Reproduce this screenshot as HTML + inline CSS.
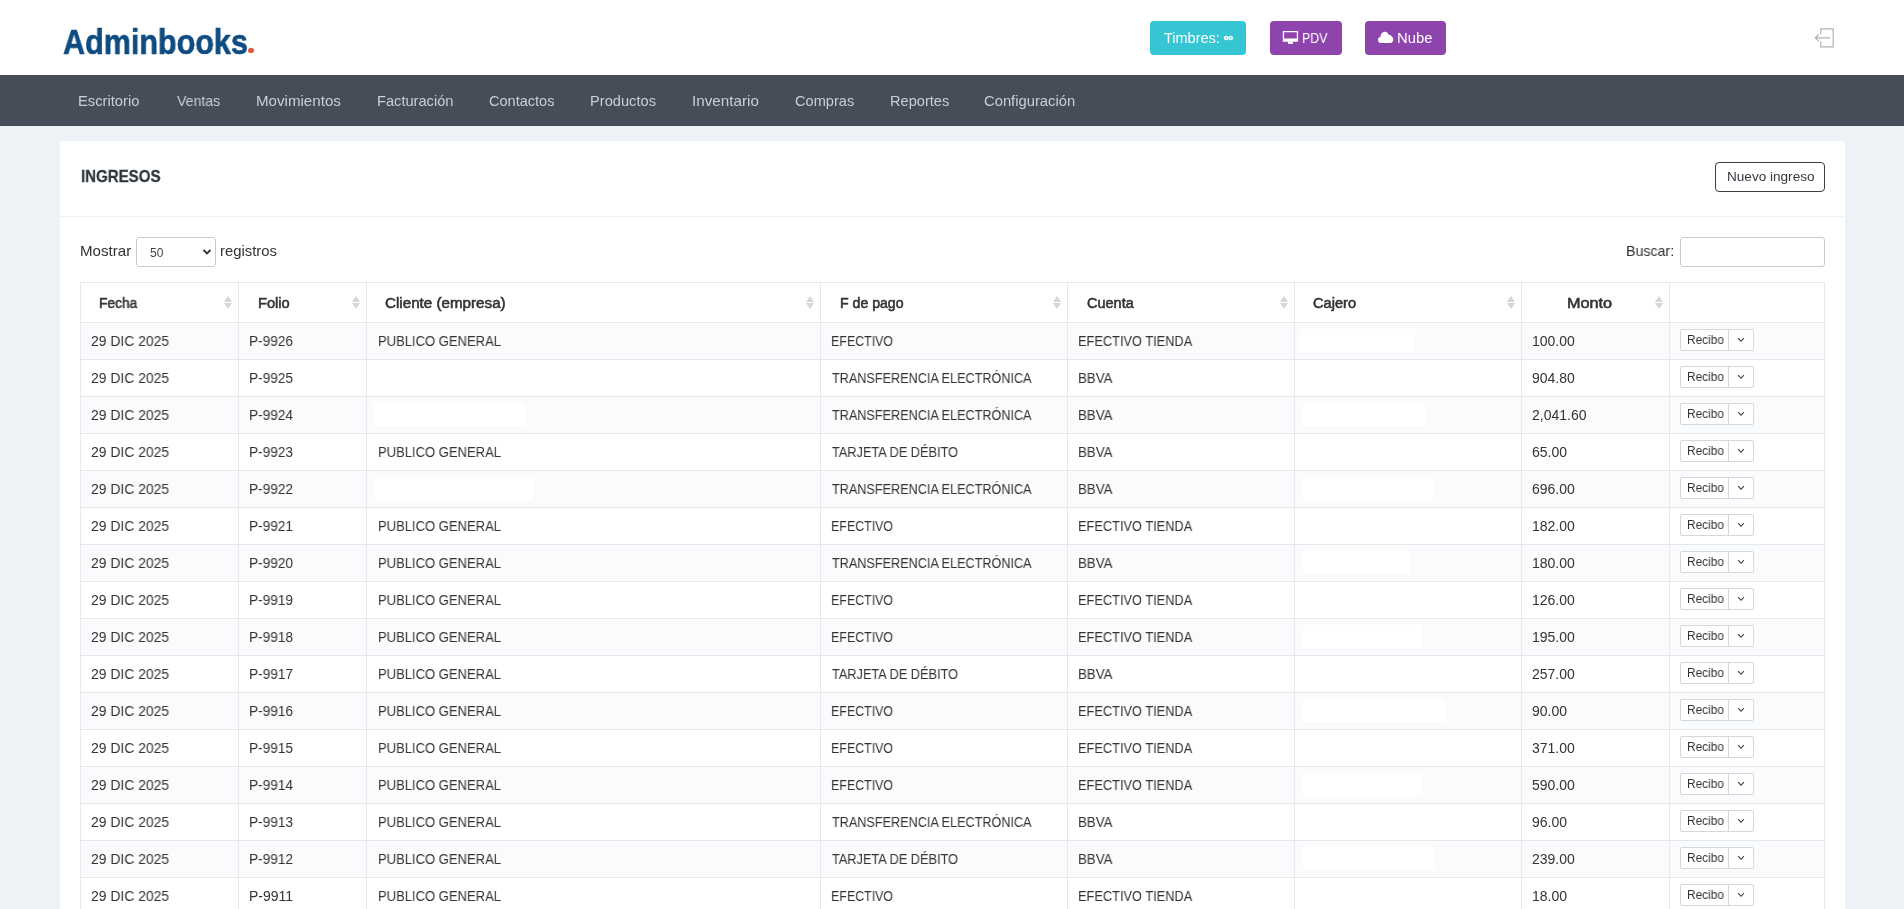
<!DOCTYPE html><html><head><meta charset="utf-8"><style>
*{box-sizing:border-box}
html,body{margin:0;padding:0}
body{width:1904px;height:909px;overflow:hidden;position:relative;background:#eef1f6;font-family:'Liberation Sans', sans-serif}
.t{position:absolute;white-space:nowrap;transform-origin:0 0;will-change:transform}
.a{position:absolute}
</style></head><body>
<div class="a" style="left:0;top:0;width:1904px;height:75px;background:#fff"></div>
<div class="a" style="left:0;top:75px;width:1904px;height:51px;background:#474d58"></div>
<div class="a" style="left:60px;top:141px;width:1785px;height:800px;background:#fff;border-radius:3px"></div>
<div class="a" style="left:60px;top:216px;width:1785px;height:1px;background:#eef1f5"></div>

<div class="a" style="left:80px;top:322px;width:1744px;height:37px;background:#fafbfd"></div>
<div class="a" style="left:80px;top:396px;width:1744px;height:37px;background:#fafbfd"></div>
<div class="a" style="left:80px;top:470px;width:1744px;height:37px;background:#fafbfd"></div>
<div class="a" style="left:80px;top:544px;width:1744px;height:37px;background:#fafbfd"></div>
<div class="a" style="left:80px;top:618px;width:1744px;height:37px;background:#fafbfd"></div>
<div class="a" style="left:80px;top:692px;width:1744px;height:37px;background:#fafbfd"></div>
<div class="a" style="left:80px;top:766px;width:1744px;height:37px;background:#fafbfd"></div>
<div class="a" style="left:80px;top:840px;width:1744px;height:37px;background:#fafbfd"></div>
<div class="a" style="left:1300px;top:329px;width:115px;height:23px;background:#fff"></div>
<div class="a" style="left:373px;top:403px;width:152px;height:23px;background:#fff"></div>
<div class="a" style="left:1303px;top:403px;width:122px;height:23px;background:#fff"></div>
<div class="a" style="left:375px;top:477px;width:158px;height:23px;background:#fff"></div>
<div class="a" style="left:1303px;top:477px;width:130px;height:23px;background:#fff"></div>
<div class="a" style="left:1303px;top:551px;width:107px;height:23px;background:#fff"></div>
<div class="a" style="left:1303px;top:625px;width:119px;height:23px;background:#fff"></div>
<div class="a" style="left:1303px;top:699px;width:142px;height:23px;background:#fff"></div>
<div class="a" style="left:1303px;top:773px;width:119px;height:23px;background:#fff"></div>
<div class="a" style="left:1303px;top:847px;width:132px;height:23px;background:#fff"></div>
<div class="a" style="left:80px;top:282px;width:1745px;height:1px;background:#e7e8ec"></div>
<div class="a" style="left:80px;top:322px;width:1745px;height:1px;background:#e7e8ec"></div>
<div class="a" style="left:80px;top:359px;width:1745px;height:1px;background:#e7e8ec"></div>
<div class="a" style="left:80px;top:396px;width:1745px;height:1px;background:#e7e8ec"></div>
<div class="a" style="left:80px;top:433px;width:1745px;height:1px;background:#e7e8ec"></div>
<div class="a" style="left:80px;top:470px;width:1745px;height:1px;background:#e7e8ec"></div>
<div class="a" style="left:80px;top:507px;width:1745px;height:1px;background:#e7e8ec"></div>
<div class="a" style="left:80px;top:544px;width:1745px;height:1px;background:#e7e8ec"></div>
<div class="a" style="left:80px;top:581px;width:1745px;height:1px;background:#e7e8ec"></div>
<div class="a" style="left:80px;top:618px;width:1745px;height:1px;background:#e7e8ec"></div>
<div class="a" style="left:80px;top:655px;width:1745px;height:1px;background:#e7e8ec"></div>
<div class="a" style="left:80px;top:692px;width:1745px;height:1px;background:#e7e8ec"></div>
<div class="a" style="left:80px;top:729px;width:1745px;height:1px;background:#e7e8ec"></div>
<div class="a" style="left:80px;top:766px;width:1745px;height:1px;background:#e7e8ec"></div>
<div class="a" style="left:80px;top:803px;width:1745px;height:1px;background:#e7e8ec"></div>
<div class="a" style="left:80px;top:840px;width:1745px;height:1px;background:#e7e8ec"></div>
<div class="a" style="left:80px;top:877px;width:1745px;height:1px;background:#e7e8ec"></div>
<div class="a" style="left:80px;top:914px;width:1745px;height:1px;background:#e7e8ec"></div>
<div class="a" style="left:80px;top:282px;width:1px;height:640px;background:#e7e8ec"></div>
<div class="a" style="left:238px;top:282px;width:1px;height:640px;background:#e7e8ec"></div>
<div class="a" style="left:366px;top:282px;width:1px;height:640px;background:#e7e8ec"></div>
<div class="a" style="left:820px;top:282px;width:1px;height:640px;background:#e7e8ec"></div>
<div class="a" style="left:1067px;top:282px;width:1px;height:640px;background:#e7e8ec"></div>
<div class="a" style="left:1294px;top:282px;width:1px;height:640px;background:#e7e8ec"></div>
<div class="a" style="left:1521px;top:282px;width:1px;height:640px;background:#e7e8ec"></div>
<div class="a" style="left:1669px;top:282px;width:1px;height:640px;background:#e7e8ec"></div>
<div class="a" style="left:1824px;top:282px;width:1px;height:640px;background:#e7e8ec"></div>
<svg class="a" style="left:224px;top:295px" width="8" height="15" viewBox="0 0 8 15"><path d="M4 1L8 7H0Z M4 14L8 8H0Z" fill="#d3d6da"/></svg>
<svg class="a" style="left:352px;top:295px" width="8" height="15" viewBox="0 0 8 15"><path d="M4 1L8 7H0Z M4 14L8 8H0Z" fill="#d3d6da"/></svg>
<svg class="a" style="left:806px;top:295px" width="8" height="15" viewBox="0 0 8 15"><path d="M4 1L8 7H0Z M4 14L8 8H0Z" fill="#d3d6da"/></svg>
<svg class="a" style="left:1053px;top:295px" width="8" height="15" viewBox="0 0 8 15"><path d="M4 1L8 7H0Z M4 14L8 8H0Z" fill="#d3d6da"/></svg>
<svg class="a" style="left:1280px;top:295px" width="8" height="15" viewBox="0 0 8 15"><path d="M4 1L8 7H0Z M4 14L8 8H0Z" fill="#d3d6da"/></svg>
<svg class="a" style="left:1507px;top:295px" width="8" height="15" viewBox="0 0 8 15"><path d="M4 1L8 7H0Z M4 14L8 8H0Z" fill="#d3d6da"/></svg>
<svg class="a" style="left:1655px;top:295px" width="8" height="15" viewBox="0 0 8 15"><path d="M4 1L8 7H0Z M4 14L8 8H0Z" fill="#d3d6da"/></svg>
<div class="a" style="left:1680px;top:329px;width:74px;height:22px;border:1px solid #d4d7db;border-radius:2px;background:#fff"></div>
<div class="a" style="left:1728px;top:329px;width:1px;height:22px;background:#d4d7db"></div>
<svg class="a" style="left:1737px;top:337px" width="8" height="6" viewBox="0 0 8 6"><path d="M1 1.2L4 4.2L7 1.2" stroke="#444" stroke-width="1.1" fill="none"/></svg>
<div class="a" style="left:1680px;top:366px;width:74px;height:22px;border:1px solid #d4d7db;border-radius:2px;background:#fff"></div>
<div class="a" style="left:1728px;top:366px;width:1px;height:22px;background:#d4d7db"></div>
<svg class="a" style="left:1737px;top:374px" width="8" height="6" viewBox="0 0 8 6"><path d="M1 1.2L4 4.2L7 1.2" stroke="#444" stroke-width="1.1" fill="none"/></svg>
<div class="a" style="left:1680px;top:403px;width:74px;height:22px;border:1px solid #d4d7db;border-radius:2px;background:#fff"></div>
<div class="a" style="left:1728px;top:403px;width:1px;height:22px;background:#d4d7db"></div>
<svg class="a" style="left:1737px;top:411px" width="8" height="6" viewBox="0 0 8 6"><path d="M1 1.2L4 4.2L7 1.2" stroke="#444" stroke-width="1.1" fill="none"/></svg>
<div class="a" style="left:1680px;top:440px;width:74px;height:22px;border:1px solid #d4d7db;border-radius:2px;background:#fff"></div>
<div class="a" style="left:1728px;top:440px;width:1px;height:22px;background:#d4d7db"></div>
<svg class="a" style="left:1737px;top:448px" width="8" height="6" viewBox="0 0 8 6"><path d="M1 1.2L4 4.2L7 1.2" stroke="#444" stroke-width="1.1" fill="none"/></svg>
<div class="a" style="left:1680px;top:477px;width:74px;height:22px;border:1px solid #d4d7db;border-radius:2px;background:#fff"></div>
<div class="a" style="left:1728px;top:477px;width:1px;height:22px;background:#d4d7db"></div>
<svg class="a" style="left:1737px;top:485px" width="8" height="6" viewBox="0 0 8 6"><path d="M1 1.2L4 4.2L7 1.2" stroke="#444" stroke-width="1.1" fill="none"/></svg>
<div class="a" style="left:1680px;top:514px;width:74px;height:22px;border:1px solid #d4d7db;border-radius:2px;background:#fff"></div>
<div class="a" style="left:1728px;top:514px;width:1px;height:22px;background:#d4d7db"></div>
<svg class="a" style="left:1737px;top:522px" width="8" height="6" viewBox="0 0 8 6"><path d="M1 1.2L4 4.2L7 1.2" stroke="#444" stroke-width="1.1" fill="none"/></svg>
<div class="a" style="left:1680px;top:551px;width:74px;height:22px;border:1px solid #d4d7db;border-radius:2px;background:#fff"></div>
<div class="a" style="left:1728px;top:551px;width:1px;height:22px;background:#d4d7db"></div>
<svg class="a" style="left:1737px;top:559px" width="8" height="6" viewBox="0 0 8 6"><path d="M1 1.2L4 4.2L7 1.2" stroke="#444" stroke-width="1.1" fill="none"/></svg>
<div class="a" style="left:1680px;top:588px;width:74px;height:22px;border:1px solid #d4d7db;border-radius:2px;background:#fff"></div>
<div class="a" style="left:1728px;top:588px;width:1px;height:22px;background:#d4d7db"></div>
<svg class="a" style="left:1737px;top:596px" width="8" height="6" viewBox="0 0 8 6"><path d="M1 1.2L4 4.2L7 1.2" stroke="#444" stroke-width="1.1" fill="none"/></svg>
<div class="a" style="left:1680px;top:625px;width:74px;height:22px;border:1px solid #d4d7db;border-radius:2px;background:#fff"></div>
<div class="a" style="left:1728px;top:625px;width:1px;height:22px;background:#d4d7db"></div>
<svg class="a" style="left:1737px;top:633px" width="8" height="6" viewBox="0 0 8 6"><path d="M1 1.2L4 4.2L7 1.2" stroke="#444" stroke-width="1.1" fill="none"/></svg>
<div class="a" style="left:1680px;top:662px;width:74px;height:22px;border:1px solid #d4d7db;border-radius:2px;background:#fff"></div>
<div class="a" style="left:1728px;top:662px;width:1px;height:22px;background:#d4d7db"></div>
<svg class="a" style="left:1737px;top:670px" width="8" height="6" viewBox="0 0 8 6"><path d="M1 1.2L4 4.2L7 1.2" stroke="#444" stroke-width="1.1" fill="none"/></svg>
<div class="a" style="left:1680px;top:699px;width:74px;height:22px;border:1px solid #d4d7db;border-radius:2px;background:#fff"></div>
<div class="a" style="left:1728px;top:699px;width:1px;height:22px;background:#d4d7db"></div>
<svg class="a" style="left:1737px;top:707px" width="8" height="6" viewBox="0 0 8 6"><path d="M1 1.2L4 4.2L7 1.2" stroke="#444" stroke-width="1.1" fill="none"/></svg>
<div class="a" style="left:1680px;top:736px;width:74px;height:22px;border:1px solid #d4d7db;border-radius:2px;background:#fff"></div>
<div class="a" style="left:1728px;top:736px;width:1px;height:22px;background:#d4d7db"></div>
<svg class="a" style="left:1737px;top:744px" width="8" height="6" viewBox="0 0 8 6"><path d="M1 1.2L4 4.2L7 1.2" stroke="#444" stroke-width="1.1" fill="none"/></svg>
<div class="a" style="left:1680px;top:773px;width:74px;height:22px;border:1px solid #d4d7db;border-radius:2px;background:#fff"></div>
<div class="a" style="left:1728px;top:773px;width:1px;height:22px;background:#d4d7db"></div>
<svg class="a" style="left:1737px;top:781px" width="8" height="6" viewBox="0 0 8 6"><path d="M1 1.2L4 4.2L7 1.2" stroke="#444" stroke-width="1.1" fill="none"/></svg>
<div class="a" style="left:1680px;top:810px;width:74px;height:22px;border:1px solid #d4d7db;border-radius:2px;background:#fff"></div>
<div class="a" style="left:1728px;top:810px;width:1px;height:22px;background:#d4d7db"></div>
<svg class="a" style="left:1737px;top:818px" width="8" height="6" viewBox="0 0 8 6"><path d="M1 1.2L4 4.2L7 1.2" stroke="#444" stroke-width="1.1" fill="none"/></svg>
<div class="a" style="left:1680px;top:847px;width:74px;height:22px;border:1px solid #d4d7db;border-radius:2px;background:#fff"></div>
<div class="a" style="left:1728px;top:847px;width:1px;height:22px;background:#d4d7db"></div>
<svg class="a" style="left:1737px;top:855px" width="8" height="6" viewBox="0 0 8 6"><path d="M1 1.2L4 4.2L7 1.2" stroke="#444" stroke-width="1.1" fill="none"/></svg>
<div class="a" style="left:1680px;top:884px;width:74px;height:22px;border:1px solid #d4d7db;border-radius:2px;background:#fff"></div>
<div class="a" style="left:1728px;top:884px;width:1px;height:22px;background:#d4d7db"></div>
<svg class="a" style="left:1737px;top:892px" width="8" height="6" viewBox="0 0 8 6"><path d="M1 1.2L4 4.2L7 1.2" stroke="#444" stroke-width="1.1" fill="none"/></svg>
<div class="a" style="left:136px;top:237px;width:80px;height:30px;border:1px solid #c9cacc;border-radius:3px;background:#fff"></div>
<svg class="a" style="left:202px;top:248px" width="10" height="8" viewBox="0 0 10 8"><path d="M1.5 2L5 5.5L8.5 2" stroke="#333" stroke-width="1.8" fill="none"/></svg>
<div class="a" style="left:1680px;top:237px;width:145px;height:30px;border:1px solid #c9cacc;border-radius:3px;background:#fff"></div>
<div class="a" style="left:1715px;top:162px;width:110px;height:30px;border:1px solid #3a3f44;border-radius:4px;background:#fff"></div>
<div class="a" style="left:1150px;top:21px;width:96px;height:34px;border-radius:4px;background:#36c6d3"></div>
<div class="a" style="left:1270px;top:21px;width:72px;height:34px;border-radius:4px;background:#8e44ad"></div>
<div class="a" style="left:1365px;top:21px;width:81px;height:34px;border-radius:4px;background:#8e44ad"></div>
<svg class="a" style="left:1282px;top:30px" width="17" height="15" viewBox="0 0 17 15"><path d="M0.8 1H16.1V11.7H0.8Z M2.1 2.2V8.6H14.8V2.2Z" fill="#fff" fill-rule="evenodd"/><path d="M6 11.5H11V13.9H6Z" fill="#fff"/></svg>
<svg class="a" style="left:1376px;top:30px" width="20" height="15" viewBox="0 0 20 15"><path d="M5 13C3.2 13 2 11.7 2 10C2 8.5 3 7.4 4.4 7.1C4.6 4.2 6.3 1.8 8.8 1.8C10.7 1.8 12.1 3 12.7 4.7C15.3 4.9 17.3 7.2 17.3 9.7C17.3 11.6 16.1 13 14.4 13Z" fill="#fff"/></svg>
<svg class="a" style="left:1810px;top:26px" width="26" height="24" viewBox="0 0 26 24"><path d="M10.8 8.5V2.8H23.2V20.8H10.8V15" stroke="#aeb1b5" stroke-width="1.15" fill="none"/><path d="M20 11.8H5.5 M8.8 8.5L5.3 11.8L8.8 15.1" stroke="#aeb1b5" stroke-width="1.15" fill="none"/></svg>
<div class="a" style="left:248.4px;top:48.1px;width:5.4px;height:5.4px;border-radius:50%;background:#e2583e"></div>
<svg class="a" style="left:1222px;top:34px" width="13" height="8" viewBox="0 0 13 8"><circle cx="4.1" cy="4" r="1.55" stroke="#fff" stroke-width="1.6" fill="none"/><circle cx="8.7" cy="4" r="1.55" stroke="#fff" stroke-width="1.6" fill="none"/></svg>
<div class="t" style="left:78.38px;top:90.50px;font-size:14.5px;line-height:20.5px;font-weight:400;color:#c9ced6;transform:scaleX(1.0153)">Escritorio</div>
<div class="t" style="left:176.70px;top:90.50px;font-size:14.5px;line-height:20.5px;font-weight:400;color:#c9ced6;transform:scaleX(0.9750)">Ventas</div>
<div class="t" style="left:255.96px;top:90.50px;font-size:14.5px;line-height:20.5px;font-weight:400;color:#c9ced6;transform:scaleX(1.0425)">Movimientos</div>
<div class="t" style="left:376.69px;top:90.50px;font-size:14.5px;line-height:20.5px;font-weight:400;color:#c9ced6;transform:scaleX(1.0095)">Facturación</div>
<div class="t" style="left:488.50px;top:90.50px;font-size:14.5px;line-height:20.5px;font-weight:400;color:#c9ced6;transform:scaleX(1.0016)">Contactos</div>
<div class="t" style="left:590.19px;top:90.50px;font-size:14.5px;line-height:20.5px;font-weight:400;color:#c9ced6;transform:scaleX(1.0109)">Productos</div>
<div class="t" style="left:692.25px;top:90.50px;font-size:14.5px;line-height:20.5px;font-weight:400;color:#c9ced6;transform:scaleX(1.0500)">Inventario</div>
<div class="t" style="left:794.99px;top:90.50px;font-size:14.5px;line-height:20.5px;font-weight:400;color:#c9ced6;transform:scaleX(1.0070)">Compras</div>
<div class="t" style="left:889.89px;top:90.50px;font-size:14.5px;line-height:20.5px;font-weight:400;color:#c9ced6;transform:scaleX(1.0070)">Reportes</div>
<div class="t" style="left:984.48px;top:90.50px;font-size:14.5px;line-height:20.5px;font-weight:400;color:#c9ced6;transform:scaleX(1.0193)">Configuración</div>
<div class="t" style="left:80.56px;top:164.60px;font-size:17px;line-height:23px;font-weight:700;color:#2f353b;-webkit-text-stroke:0.3px #2f353b;transform:scaleX(0.8852)">INGRESOS</div>
<div class="t" style="left:1727.26px;top:167.40px;font-size:13px;line-height:19px;font-weight:400;color:#32383e;transform:scaleX(1.0439)">Nuevo ingreso</div>
<div class="t" style="left:80.26px;top:241.00px;font-size:14.5px;line-height:20.5px;font-weight:400;color:#333;transform:scaleX(1.0417)">Mostrar</div>
<div class="t" style="left:219.78px;top:241.00px;font-size:14.5px;line-height:20.5px;font-weight:400;color:#333;transform:scaleX(1.0241)">registros</div>
<div class="t" style="left:1626.42px;top:241.00px;font-size:14.5px;line-height:20.5px;font-weight:400;color:#333;transform:scaleX(0.9787)">Buscar:</div>
<div class="t" style="left:149.90px;top:244.20px;font-size:12px;line-height:18px;font-weight:400;color:#444;transform:scaleX(1.0000)">50</div>
<div class="t" style="left:99.41px;top:292.90px;font-size:14px;line-height:20px;font-weight:400;color:#333;-webkit-text-stroke:0.55px #333;transform:scaleX(0.9868)">Fecha</div>
<div class="t" style="left:257.76px;top:292.90px;font-size:14px;line-height:20px;font-weight:400;color:#333;-webkit-text-stroke:0.55px #333;transform:scaleX(1.0448)">Folio</div>
<div class="t" style="left:385.12px;top:292.90px;font-size:14px;line-height:20px;font-weight:400;color:#333;-webkit-text-stroke:0.55px #333;transform:scaleX(1.0844)">Cliente (empresa)</div>
<div class="t" style="left:839.69px;top:292.90px;font-size:14px;line-height:20px;font-weight:400;color:#333;-webkit-text-stroke:0.55px #333;transform:scaleX(1.0081)">F de pago</div>
<div class="t" style="left:1086.76px;top:292.90px;font-size:14px;line-height:20px;font-weight:400;color:#333;-webkit-text-stroke:0.55px #333;transform:scaleX(1.0364)">Cuenta</div>
<div class="t" style="left:1313.36px;top:292.90px;font-size:14px;line-height:20px;font-weight:400;color:#333;-webkit-text-stroke:0.55px #333;transform:scaleX(1.0425)">Cajero</div>
<div class="t" style="left:1567.44px;top:292.90px;font-size:14px;line-height:20px;font-weight:400;color:#333;-webkit-text-stroke:0.55px #333;transform:scaleX(1.1595)">Monto</div>
<div class="t" style="left:91.31px;top:330.90px;font-size:14px;line-height:20px;font-weight:400;color:#333;transform:scaleX(0.9935)">29 DIC 2025</div>
<div class="t" style="left:249.42px;top:330.90px;font-size:14px;line-height:20px;font-weight:400;color:#333;transform:scaleX(0.9773)">P-9926</div>
<div class="t" style="left:377.57px;top:330.90px;font-size:14px;line-height:20px;font-weight:400;color:#333;transform:scaleX(0.9298)">PUBLICO GENERAL</div>
<div class="t" style="left:830.71px;top:330.90px;font-size:14px;line-height:20px;font-weight:400;color:#333;transform:scaleX(0.8868)">EFECTIVO</div>
<div class="t" style="left:1078.49px;top:330.90px;font-size:14px;line-height:20px;font-weight:400;color:#333;transform:scaleX(0.9137)">EFECTIVO TIENDA</div>
<div class="t" style="left:1531.71px;top:330.90px;font-size:14px;line-height:20px;font-weight:400;color:#333;transform:scaleX(0.9927)">100.00</div>
<div class="t" style="left:1686.51px;top:331.10px;font-size:12px;line-height:18px;font-weight:400;color:#333;transform:scaleX(0.9861)">Recibo</div>
<div class="t" style="left:91.31px;top:367.90px;font-size:14px;line-height:20px;font-weight:400;color:#333;transform:scaleX(0.9935)">29 DIC 2025</div>
<div class="t" style="left:249.42px;top:367.90px;font-size:14px;line-height:20px;font-weight:400;color:#333;transform:scaleX(0.9773)">P-9925</div>
<div class="t" style="left:831.60px;top:367.90px;font-size:14px;line-height:20px;font-weight:400;color:#333;transform:scaleX(0.9032)">TRANSFERENCIA ELECTRÓNICA</div>
<div class="t" style="left:1078.45px;top:367.90px;font-size:14px;line-height:20px;font-weight:400;color:#333;transform:scaleX(0.9486)">BBVA</div>
<div class="t" style="left:1531.71px;top:367.90px;font-size:14px;line-height:20px;font-weight:400;color:#333;transform:scaleX(0.9927)">904.80</div>
<div class="t" style="left:1686.51px;top:368.10px;font-size:12px;line-height:18px;font-weight:400;color:#333;transform:scaleX(0.9861)">Recibo</div>
<div class="t" style="left:91.31px;top:404.90px;font-size:14px;line-height:20px;font-weight:400;color:#333;transform:scaleX(0.9935)">29 DIC 2025</div>
<div class="t" style="left:249.42px;top:404.90px;font-size:14px;line-height:20px;font-weight:400;color:#333;transform:scaleX(0.9773)">P-9924</div>
<div class="t" style="left:831.60px;top:404.90px;font-size:14px;line-height:20px;font-weight:400;color:#333;transform:scaleX(0.9032)">TRANSFERENCIA ELECTRÓNICA</div>
<div class="t" style="left:1078.45px;top:404.90px;font-size:14px;line-height:20px;font-weight:400;color:#333;transform:scaleX(0.9486)">BBVA</div>
<div class="t" style="left:1531.71px;top:404.90px;font-size:14px;line-height:20px;font-weight:400;color:#333;transform:scaleX(0.9927)">2,041.60</div>
<div class="t" style="left:1686.51px;top:405.10px;font-size:12px;line-height:18px;font-weight:400;color:#333;transform:scaleX(0.9861)">Recibo</div>
<div class="t" style="left:91.31px;top:441.90px;font-size:14px;line-height:20px;font-weight:400;color:#333;transform:scaleX(0.9935)">29 DIC 2025</div>
<div class="t" style="left:249.42px;top:441.90px;font-size:14px;line-height:20px;font-weight:400;color:#333;transform:scaleX(0.9773)">P-9923</div>
<div class="t" style="left:377.57px;top:441.90px;font-size:14px;line-height:20px;font-weight:400;color:#333;transform:scaleX(0.9298)">PUBLICO GENERAL</div>
<div class="t" style="left:831.60px;top:441.90px;font-size:14px;line-height:20px;font-weight:400;color:#333;transform:scaleX(0.9101)">TARJETA DE DÉBITO</div>
<div class="t" style="left:1078.45px;top:441.90px;font-size:14px;line-height:20px;font-weight:400;color:#333;transform:scaleX(0.9486)">BBVA</div>
<div class="t" style="left:1531.71px;top:441.90px;font-size:14px;line-height:20px;font-weight:400;color:#333;transform:scaleX(0.9927)">65.00</div>
<div class="t" style="left:1686.51px;top:442.10px;font-size:12px;line-height:18px;font-weight:400;color:#333;transform:scaleX(0.9861)">Recibo</div>
<div class="t" style="left:91.31px;top:478.90px;font-size:14px;line-height:20px;font-weight:400;color:#333;transform:scaleX(0.9935)">29 DIC 2025</div>
<div class="t" style="left:249.42px;top:478.90px;font-size:14px;line-height:20px;font-weight:400;color:#333;transform:scaleX(0.9773)">P-9922</div>
<div class="t" style="left:831.60px;top:478.90px;font-size:14px;line-height:20px;font-weight:400;color:#333;transform:scaleX(0.9032)">TRANSFERENCIA ELECTRÓNICA</div>
<div class="t" style="left:1078.45px;top:478.90px;font-size:14px;line-height:20px;font-weight:400;color:#333;transform:scaleX(0.9486)">BBVA</div>
<div class="t" style="left:1531.71px;top:478.90px;font-size:14px;line-height:20px;font-weight:400;color:#333;transform:scaleX(0.9927)">696.00</div>
<div class="t" style="left:1686.51px;top:479.10px;font-size:12px;line-height:18px;font-weight:400;color:#333;transform:scaleX(0.9861)">Recibo</div>
<div class="t" style="left:91.31px;top:515.90px;font-size:14px;line-height:20px;font-weight:400;color:#333;transform:scaleX(0.9935)">29 DIC 2025</div>
<div class="t" style="left:249.42px;top:515.90px;font-size:14px;line-height:20px;font-weight:400;color:#333;transform:scaleX(0.9773)">P-9921</div>
<div class="t" style="left:377.57px;top:515.90px;font-size:14px;line-height:20px;font-weight:400;color:#333;transform:scaleX(0.9298)">PUBLICO GENERAL</div>
<div class="t" style="left:830.71px;top:515.90px;font-size:14px;line-height:20px;font-weight:400;color:#333;transform:scaleX(0.8868)">EFECTIVO</div>
<div class="t" style="left:1078.49px;top:515.90px;font-size:14px;line-height:20px;font-weight:400;color:#333;transform:scaleX(0.9137)">EFECTIVO TIENDA</div>
<div class="t" style="left:1531.71px;top:515.90px;font-size:14px;line-height:20px;font-weight:400;color:#333;transform:scaleX(0.9927)">182.00</div>
<div class="t" style="left:1686.51px;top:516.10px;font-size:12px;line-height:18px;font-weight:400;color:#333;transform:scaleX(0.9861)">Recibo</div>
<div class="t" style="left:91.31px;top:552.90px;font-size:14px;line-height:20px;font-weight:400;color:#333;transform:scaleX(0.9935)">29 DIC 2025</div>
<div class="t" style="left:249.42px;top:552.90px;font-size:14px;line-height:20px;font-weight:400;color:#333;transform:scaleX(0.9773)">P-9920</div>
<div class="t" style="left:377.57px;top:552.90px;font-size:14px;line-height:20px;font-weight:400;color:#333;transform:scaleX(0.9298)">PUBLICO GENERAL</div>
<div class="t" style="left:831.60px;top:552.90px;font-size:14px;line-height:20px;font-weight:400;color:#333;transform:scaleX(0.9032)">TRANSFERENCIA ELECTRÓNICA</div>
<div class="t" style="left:1078.45px;top:552.90px;font-size:14px;line-height:20px;font-weight:400;color:#333;transform:scaleX(0.9486)">BBVA</div>
<div class="t" style="left:1531.71px;top:552.90px;font-size:14px;line-height:20px;font-weight:400;color:#333;transform:scaleX(0.9927)">180.00</div>
<div class="t" style="left:1686.51px;top:553.10px;font-size:12px;line-height:18px;font-weight:400;color:#333;transform:scaleX(0.9861)">Recibo</div>
<div class="t" style="left:91.31px;top:589.90px;font-size:14px;line-height:20px;font-weight:400;color:#333;transform:scaleX(0.9935)">29 DIC 2025</div>
<div class="t" style="left:249.42px;top:589.90px;font-size:14px;line-height:20px;font-weight:400;color:#333;transform:scaleX(0.9773)">P-9919</div>
<div class="t" style="left:377.57px;top:589.90px;font-size:14px;line-height:20px;font-weight:400;color:#333;transform:scaleX(0.9298)">PUBLICO GENERAL</div>
<div class="t" style="left:830.71px;top:589.90px;font-size:14px;line-height:20px;font-weight:400;color:#333;transform:scaleX(0.8868)">EFECTIVO</div>
<div class="t" style="left:1078.49px;top:589.90px;font-size:14px;line-height:20px;font-weight:400;color:#333;transform:scaleX(0.9137)">EFECTIVO TIENDA</div>
<div class="t" style="left:1531.71px;top:589.90px;font-size:14px;line-height:20px;font-weight:400;color:#333;transform:scaleX(0.9927)">126.00</div>
<div class="t" style="left:1686.51px;top:590.10px;font-size:12px;line-height:18px;font-weight:400;color:#333;transform:scaleX(0.9861)">Recibo</div>
<div class="t" style="left:91.31px;top:626.90px;font-size:14px;line-height:20px;font-weight:400;color:#333;transform:scaleX(0.9935)">29 DIC 2025</div>
<div class="t" style="left:249.42px;top:626.90px;font-size:14px;line-height:20px;font-weight:400;color:#333;transform:scaleX(0.9773)">P-9918</div>
<div class="t" style="left:377.57px;top:626.90px;font-size:14px;line-height:20px;font-weight:400;color:#333;transform:scaleX(0.9298)">PUBLICO GENERAL</div>
<div class="t" style="left:830.71px;top:626.90px;font-size:14px;line-height:20px;font-weight:400;color:#333;transform:scaleX(0.8868)">EFECTIVO</div>
<div class="t" style="left:1078.49px;top:626.90px;font-size:14px;line-height:20px;font-weight:400;color:#333;transform:scaleX(0.9137)">EFECTIVO TIENDA</div>
<div class="t" style="left:1531.71px;top:626.90px;font-size:14px;line-height:20px;font-weight:400;color:#333;transform:scaleX(0.9927)">195.00</div>
<div class="t" style="left:1686.51px;top:627.10px;font-size:12px;line-height:18px;font-weight:400;color:#333;transform:scaleX(0.9861)">Recibo</div>
<div class="t" style="left:91.31px;top:663.90px;font-size:14px;line-height:20px;font-weight:400;color:#333;transform:scaleX(0.9935)">29 DIC 2025</div>
<div class="t" style="left:249.42px;top:663.90px;font-size:14px;line-height:20px;font-weight:400;color:#333;transform:scaleX(0.9773)">P-9917</div>
<div class="t" style="left:377.57px;top:663.90px;font-size:14px;line-height:20px;font-weight:400;color:#333;transform:scaleX(0.9298)">PUBLICO GENERAL</div>
<div class="t" style="left:831.60px;top:663.90px;font-size:14px;line-height:20px;font-weight:400;color:#333;transform:scaleX(0.9101)">TARJETA DE DÉBITO</div>
<div class="t" style="left:1078.45px;top:663.90px;font-size:14px;line-height:20px;font-weight:400;color:#333;transform:scaleX(0.9486)">BBVA</div>
<div class="t" style="left:1531.71px;top:663.90px;font-size:14px;line-height:20px;font-weight:400;color:#333;transform:scaleX(0.9927)">257.00</div>
<div class="t" style="left:1686.51px;top:664.10px;font-size:12px;line-height:18px;font-weight:400;color:#333;transform:scaleX(0.9861)">Recibo</div>
<div class="t" style="left:91.31px;top:700.90px;font-size:14px;line-height:20px;font-weight:400;color:#333;transform:scaleX(0.9935)">29 DIC 2025</div>
<div class="t" style="left:249.42px;top:700.90px;font-size:14px;line-height:20px;font-weight:400;color:#333;transform:scaleX(0.9773)">P-9916</div>
<div class="t" style="left:377.57px;top:700.90px;font-size:14px;line-height:20px;font-weight:400;color:#333;transform:scaleX(0.9298)">PUBLICO GENERAL</div>
<div class="t" style="left:830.71px;top:700.90px;font-size:14px;line-height:20px;font-weight:400;color:#333;transform:scaleX(0.8868)">EFECTIVO</div>
<div class="t" style="left:1078.49px;top:700.90px;font-size:14px;line-height:20px;font-weight:400;color:#333;transform:scaleX(0.9137)">EFECTIVO TIENDA</div>
<div class="t" style="left:1531.71px;top:700.90px;font-size:14px;line-height:20px;font-weight:400;color:#333;transform:scaleX(0.9927)">90.00</div>
<div class="t" style="left:1686.51px;top:701.10px;font-size:12px;line-height:18px;font-weight:400;color:#333;transform:scaleX(0.9861)">Recibo</div>
<div class="t" style="left:91.31px;top:737.90px;font-size:14px;line-height:20px;font-weight:400;color:#333;transform:scaleX(0.9935)">29 DIC 2025</div>
<div class="t" style="left:249.42px;top:737.90px;font-size:14px;line-height:20px;font-weight:400;color:#333;transform:scaleX(0.9773)">P-9915</div>
<div class="t" style="left:377.57px;top:737.90px;font-size:14px;line-height:20px;font-weight:400;color:#333;transform:scaleX(0.9298)">PUBLICO GENERAL</div>
<div class="t" style="left:830.71px;top:737.90px;font-size:14px;line-height:20px;font-weight:400;color:#333;transform:scaleX(0.8868)">EFECTIVO</div>
<div class="t" style="left:1078.49px;top:737.90px;font-size:14px;line-height:20px;font-weight:400;color:#333;transform:scaleX(0.9137)">EFECTIVO TIENDA</div>
<div class="t" style="left:1531.71px;top:737.90px;font-size:14px;line-height:20px;font-weight:400;color:#333;transform:scaleX(0.9927)">371.00</div>
<div class="t" style="left:1686.51px;top:738.10px;font-size:12px;line-height:18px;font-weight:400;color:#333;transform:scaleX(0.9861)">Recibo</div>
<div class="t" style="left:91.31px;top:774.90px;font-size:14px;line-height:20px;font-weight:400;color:#333;transform:scaleX(0.9935)">29 DIC 2025</div>
<div class="t" style="left:249.42px;top:774.90px;font-size:14px;line-height:20px;font-weight:400;color:#333;transform:scaleX(0.9773)">P-9914</div>
<div class="t" style="left:377.57px;top:774.90px;font-size:14px;line-height:20px;font-weight:400;color:#333;transform:scaleX(0.9298)">PUBLICO GENERAL</div>
<div class="t" style="left:830.71px;top:774.90px;font-size:14px;line-height:20px;font-weight:400;color:#333;transform:scaleX(0.8868)">EFECTIVO</div>
<div class="t" style="left:1078.49px;top:774.90px;font-size:14px;line-height:20px;font-weight:400;color:#333;transform:scaleX(0.9137)">EFECTIVO TIENDA</div>
<div class="t" style="left:1531.71px;top:774.90px;font-size:14px;line-height:20px;font-weight:400;color:#333;transform:scaleX(0.9927)">590.00</div>
<div class="t" style="left:1686.51px;top:775.10px;font-size:12px;line-height:18px;font-weight:400;color:#333;transform:scaleX(0.9861)">Recibo</div>
<div class="t" style="left:91.31px;top:811.90px;font-size:14px;line-height:20px;font-weight:400;color:#333;transform:scaleX(0.9935)">29 DIC 2025</div>
<div class="t" style="left:249.42px;top:811.90px;font-size:14px;line-height:20px;font-weight:400;color:#333;transform:scaleX(0.9773)">P-9913</div>
<div class="t" style="left:377.57px;top:811.90px;font-size:14px;line-height:20px;font-weight:400;color:#333;transform:scaleX(0.9298)">PUBLICO GENERAL</div>
<div class="t" style="left:831.60px;top:811.90px;font-size:14px;line-height:20px;font-weight:400;color:#333;transform:scaleX(0.9032)">TRANSFERENCIA ELECTRÓNICA</div>
<div class="t" style="left:1078.45px;top:811.90px;font-size:14px;line-height:20px;font-weight:400;color:#333;transform:scaleX(0.9486)">BBVA</div>
<div class="t" style="left:1531.71px;top:811.90px;font-size:14px;line-height:20px;font-weight:400;color:#333;transform:scaleX(0.9927)">96.00</div>
<div class="t" style="left:1686.51px;top:812.10px;font-size:12px;line-height:18px;font-weight:400;color:#333;transform:scaleX(0.9861)">Recibo</div>
<div class="t" style="left:91.31px;top:848.90px;font-size:14px;line-height:20px;font-weight:400;color:#333;transform:scaleX(0.9935)">29 DIC 2025</div>
<div class="t" style="left:249.42px;top:848.90px;font-size:14px;line-height:20px;font-weight:400;color:#333;transform:scaleX(0.9773)">P-9912</div>
<div class="t" style="left:377.57px;top:848.90px;font-size:14px;line-height:20px;font-weight:400;color:#333;transform:scaleX(0.9298)">PUBLICO GENERAL</div>
<div class="t" style="left:831.60px;top:848.90px;font-size:14px;line-height:20px;font-weight:400;color:#333;transform:scaleX(0.9101)">TARJETA DE DÉBITO</div>
<div class="t" style="left:1078.45px;top:848.90px;font-size:14px;line-height:20px;font-weight:400;color:#333;transform:scaleX(0.9486)">BBVA</div>
<div class="t" style="left:1531.71px;top:848.90px;font-size:14px;line-height:20px;font-weight:400;color:#333;transform:scaleX(0.9927)">239.00</div>
<div class="t" style="left:1686.51px;top:849.10px;font-size:12px;line-height:18px;font-weight:400;color:#333;transform:scaleX(0.9861)">Recibo</div>
<div class="t" style="left:91.31px;top:885.90px;font-size:14px;line-height:20px;font-weight:400;color:#333;transform:scaleX(0.9935)">29 DIC 2025</div>
<div class="t" style="left:249.40px;top:885.90px;font-size:14px;line-height:20px;font-weight:400;color:#333;transform:scaleX(1.0000)">P-9911</div>
<div class="t" style="left:377.57px;top:885.90px;font-size:14px;line-height:20px;font-weight:400;color:#333;transform:scaleX(0.9298)">PUBLICO GENERAL</div>
<div class="t" style="left:830.71px;top:885.90px;font-size:14px;line-height:20px;font-weight:400;color:#333;transform:scaleX(0.8868)">EFECTIVO</div>
<div class="t" style="left:1078.49px;top:885.90px;font-size:14px;line-height:20px;font-weight:400;color:#333;transform:scaleX(0.9137)">EFECTIVO TIENDA</div>
<div class="t" style="left:1531.71px;top:885.90px;font-size:14px;line-height:20px;font-weight:400;color:#333;transform:scaleX(0.9927)">18.00</div>
<div class="t" style="left:1686.51px;top:886.10px;font-size:12px;line-height:18px;font-weight:400;color:#333;transform:scaleX(0.9861)">Recibo</div>
<div class="t" style="left:63.11px;top:22.10px;font-size:34.5px;line-height:40.5px;font-weight:700;color:#0f4c81;-webkit-text-stroke:0.6px #0f4c81;transform:scaleX(0.8850)">Adminbooks</div>
<div class="t" style="left:1163.90px;top:27.90px;font-size:14px;line-height:20px;font-weight:400;color:#fff;transform:scaleX(1.0358)">Timbres:</div>
<div class="t" style="left:1301.92px;top:27.90px;font-size:14px;line-height:20px;font-weight:400;color:#fff;transform:scaleX(0.8821)">PDV</div>
<div class="t" style="left:1397.24px;top:27.90px;font-size:14px;line-height:20px;font-weight:400;color:#fff;transform:scaleX(1.0562)">Nube</div>
</body></html>
